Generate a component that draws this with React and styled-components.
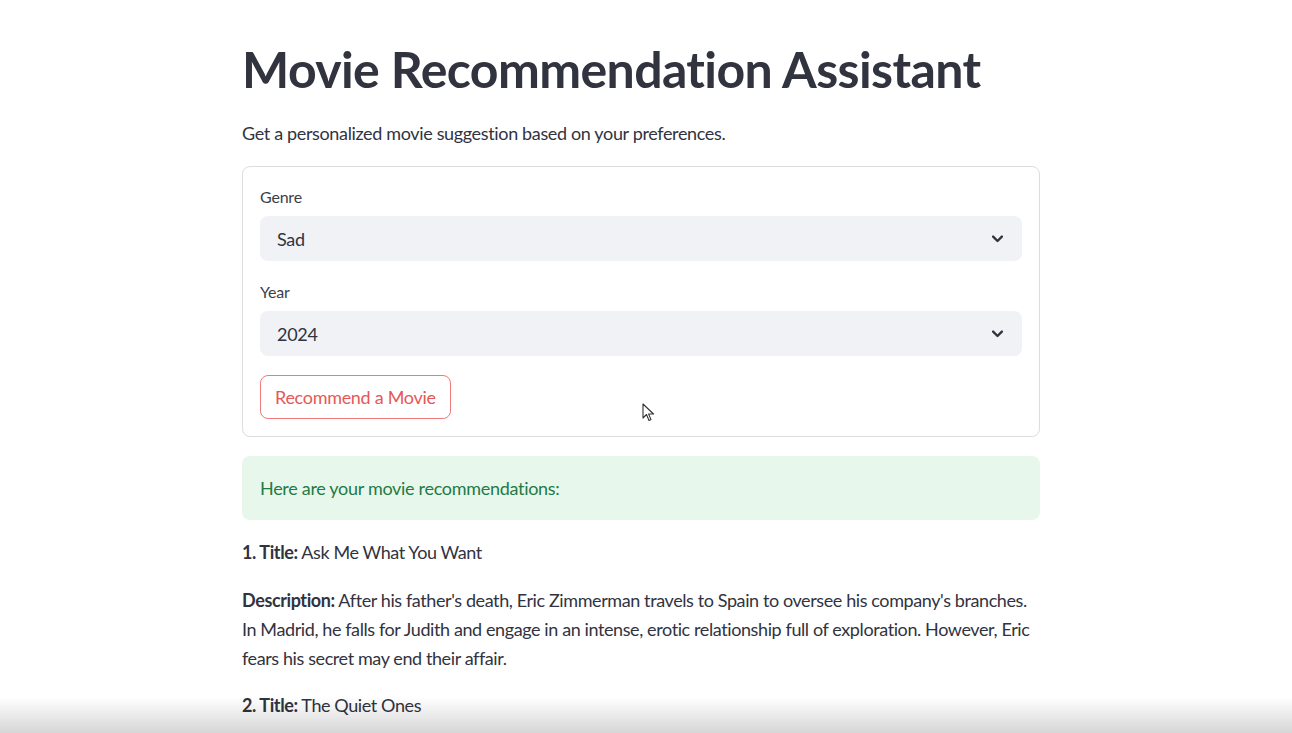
import React from 'react';
import styled, { createGlobalStyle } from 'styled-components';

const GlobalStyle = createGlobalStyle`
    body {
        margin: 0;
        background: #ffffff;
        font-family: Lato, "Noto Sans", sans-serif;
        font-variant-ligatures: none;
        color: #31333f;
    }
`;

const Main = styled.main`
    width: 798px;
    margin-left: 242px;
    padding-top: 37px;
    padding-bottom: 16px;
`;

const Title = styled.h1`
    margin: 0;
    font-size: 50px;
    font-weight: 700;
    line-height: 64px;
    letter-spacing: -0.6px;
    color: #31333f;
`;

const Subtitle = styled.p`
    margin: 18px 0 19px;
    font-size: 18px;
    line-height: 28px;
    letter-spacing: -0.35px;
`;

const FormCard = styled.form`
    border: 1px solid #dcdde1;
    border-radius: 8px;
    padding: 15px 17px 17px;
    display: flex;
    flex-direction: column;
    align-items: flex-start;
`;

const Field = styled.div`
    width: 100%;
    margin-bottom: 16px;
`;

const Label = styled.div`
    font-size: 16px;
    line-height: 30px;
    margin-bottom: 4px;
    letter-spacing: -0.2px;
    color: #3c3e4a;
`;

const Select = styled.div`
    height: 45px;
    border-radius: 8px;
    background: #f0f2f6;
    display: flex;
    align-items: center;
    justify-content: space-between;
    padding: 0 17px;
    font-size: 18px;
    letter-spacing: -0.3px;
`;

const Button = styled.button`
    height: 44px;
    padding: 0 14px;
    border: 1px solid #f07a7a;
    border-radius: 8px;
    background: #fff;
    color: #e65856;
    font-family: inherit;
    font-size: 18px;
    letter-spacing: -0.3px;
    margin-top: 3px;
`;

const Success = styled.div`
    margin-top: 19px;
    background: #e8f7ec;
    border-radius: 8px;
    height: 64px;
    padding: 0 18px;
    display: flex;
    align-items: center;
    color: #1f7a45;
    font-size: 18px;
    letter-spacing: -0.3px;
`;

const Paragraph = styled.p`
    margin: 0;
    font-size: 18px;
    line-height: 29px;
    letter-spacing: -0.4px;
    margin-top: ${props => props.gap}px;
`;

const Cursor = styled.svg`
    position: fixed;
    left: 642px;
    top: 403px;
`;

const BottomShade = styled.div`
    position: fixed;
    left: 0;
    right: 0;
    bottom: 0;
    height: 36px;
    background: linear-gradient(to bottom, rgba(0,0,0,0), rgba(0,0,0,0.16));
    pointer-events: none;
`;

const Chevron = () => (
    <svg width="15" height="15" viewBox="0 0 24 24" fill="none" stroke="#31333f" strokeWidth="3.8" strokeLinecap="round" strokeLinejoin="round">
        <polyline points="5 9 12 16 19 9" />
    </svg>
);

const Dropdown = ({ label, value }) => (
    <Field>
        <Label>{label}</Label>
        <Select>
            <span>{value}</span>
            <Chevron />
        </Select>
    </Field>
);

const App = () => {
    return (
        <React.Fragment>
            <GlobalStyle />
            <Main>
                <Title>Movie Recommendation Assistant</Title>
                <Subtitle>Get a personalized movie suggestion based on your preferences.</Subtitle>
                <FormCard>
                    <Dropdown label='Genre' value='Sad' />
                    <Dropdown label='Year' value='2024' />
                    <Button type='button'>Recommend a Movie</Button>
                </FormCard>
                <Success>Here are your movie recommendations:</Success>
                <Paragraph gap={18}><b>1. Title:</b> Ask Me What You Want</Paragraph>
                <Paragraph gap={19}>
                    <b>Description:</b> After his father's death, Eric Zimmerman travels to Spain to oversee his company's branches. In Madrid, he falls for Judith and engage in an intense, erotic relationship full of exploration. However, Eric fears his secret may end their affair.
                </Paragraph>
                <Paragraph gap={18}><b>2. Title:</b> The Quiet Ones</Paragraph>
            </Main>
            <Cursor width="13" height="19" viewBox="0 0 13 19">
                <path d="M1 1 L1 15 L4.5 11.5 L7 17.5 L9 16.6 L6.6 11 L11.5 11 Z" fill="#fff" stroke="#333" strokeWidth="1.1" strokeLinejoin="round" />
            </Cursor>
            <BottomShade />
        </React.Fragment>
    );
}

export default App;
